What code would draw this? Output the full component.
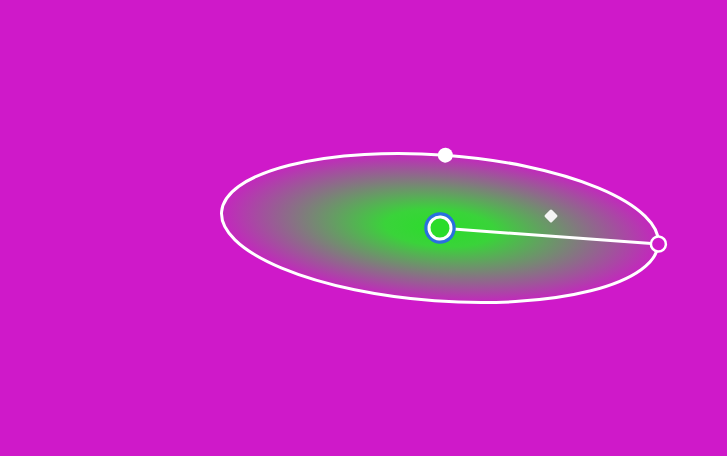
import React from 'react';

// gradient editor canvas: ellipse with center, radius handles
export default function App() {
    const cx = 440;
    const cy = 228;
    const angle = 4.2;

    return (
        <div className="relative w-full h-screen bg-[#cf19c9] overflow-hidden">
            <svg className="absolute inset-0" width="727" height="456" viewBox="0 0 727 456">
                <defs>
                    <radialGradient id="grad" cx="0.5" cy="0.5" r="0.5">
                        <stop offset="0" stopColor="#2bdc2b" />
                        <stop offset="0.25" stopColor="#3ad33a" />
                        <stop offset="1" stopColor="#c426be" />
                    </radialGradient>
                </defs>

                <g transform={`translate(${cx} ${cy}) rotate(${angle})`}>
                    <ellipse cx="0" cy="0" rx="219" ry="73" fill="url(#grad)" stroke="#ffffff" strokeWidth="3" />
                    <line x1="0" y1="0" x2="219" y2="0" stroke="#ffffff" strokeWidth="3" />
                    <circle cx="219" cy="0" r="7.5" fill="#cf19c9" stroke="#ffffff" strokeWidth="2.5" />
                    <circle cx="0" cy="-73" r="7.5" fill="#ffffff" />
                    <circle cx="0" cy="0" r="14" fill="#2bdc2b" stroke="#2a6fe0" strokeWidth="3.5" />
                    <circle cx="0" cy="0" r="11" fill="none" stroke="#ffffff" strokeWidth="3" />
                </g>
                <rect x="546" y="211" width="10" height="10" rx="1.5" fill="#f4f4f4" transform="rotate(45 551 216)" />
            </svg>
        </div>
    );
}
